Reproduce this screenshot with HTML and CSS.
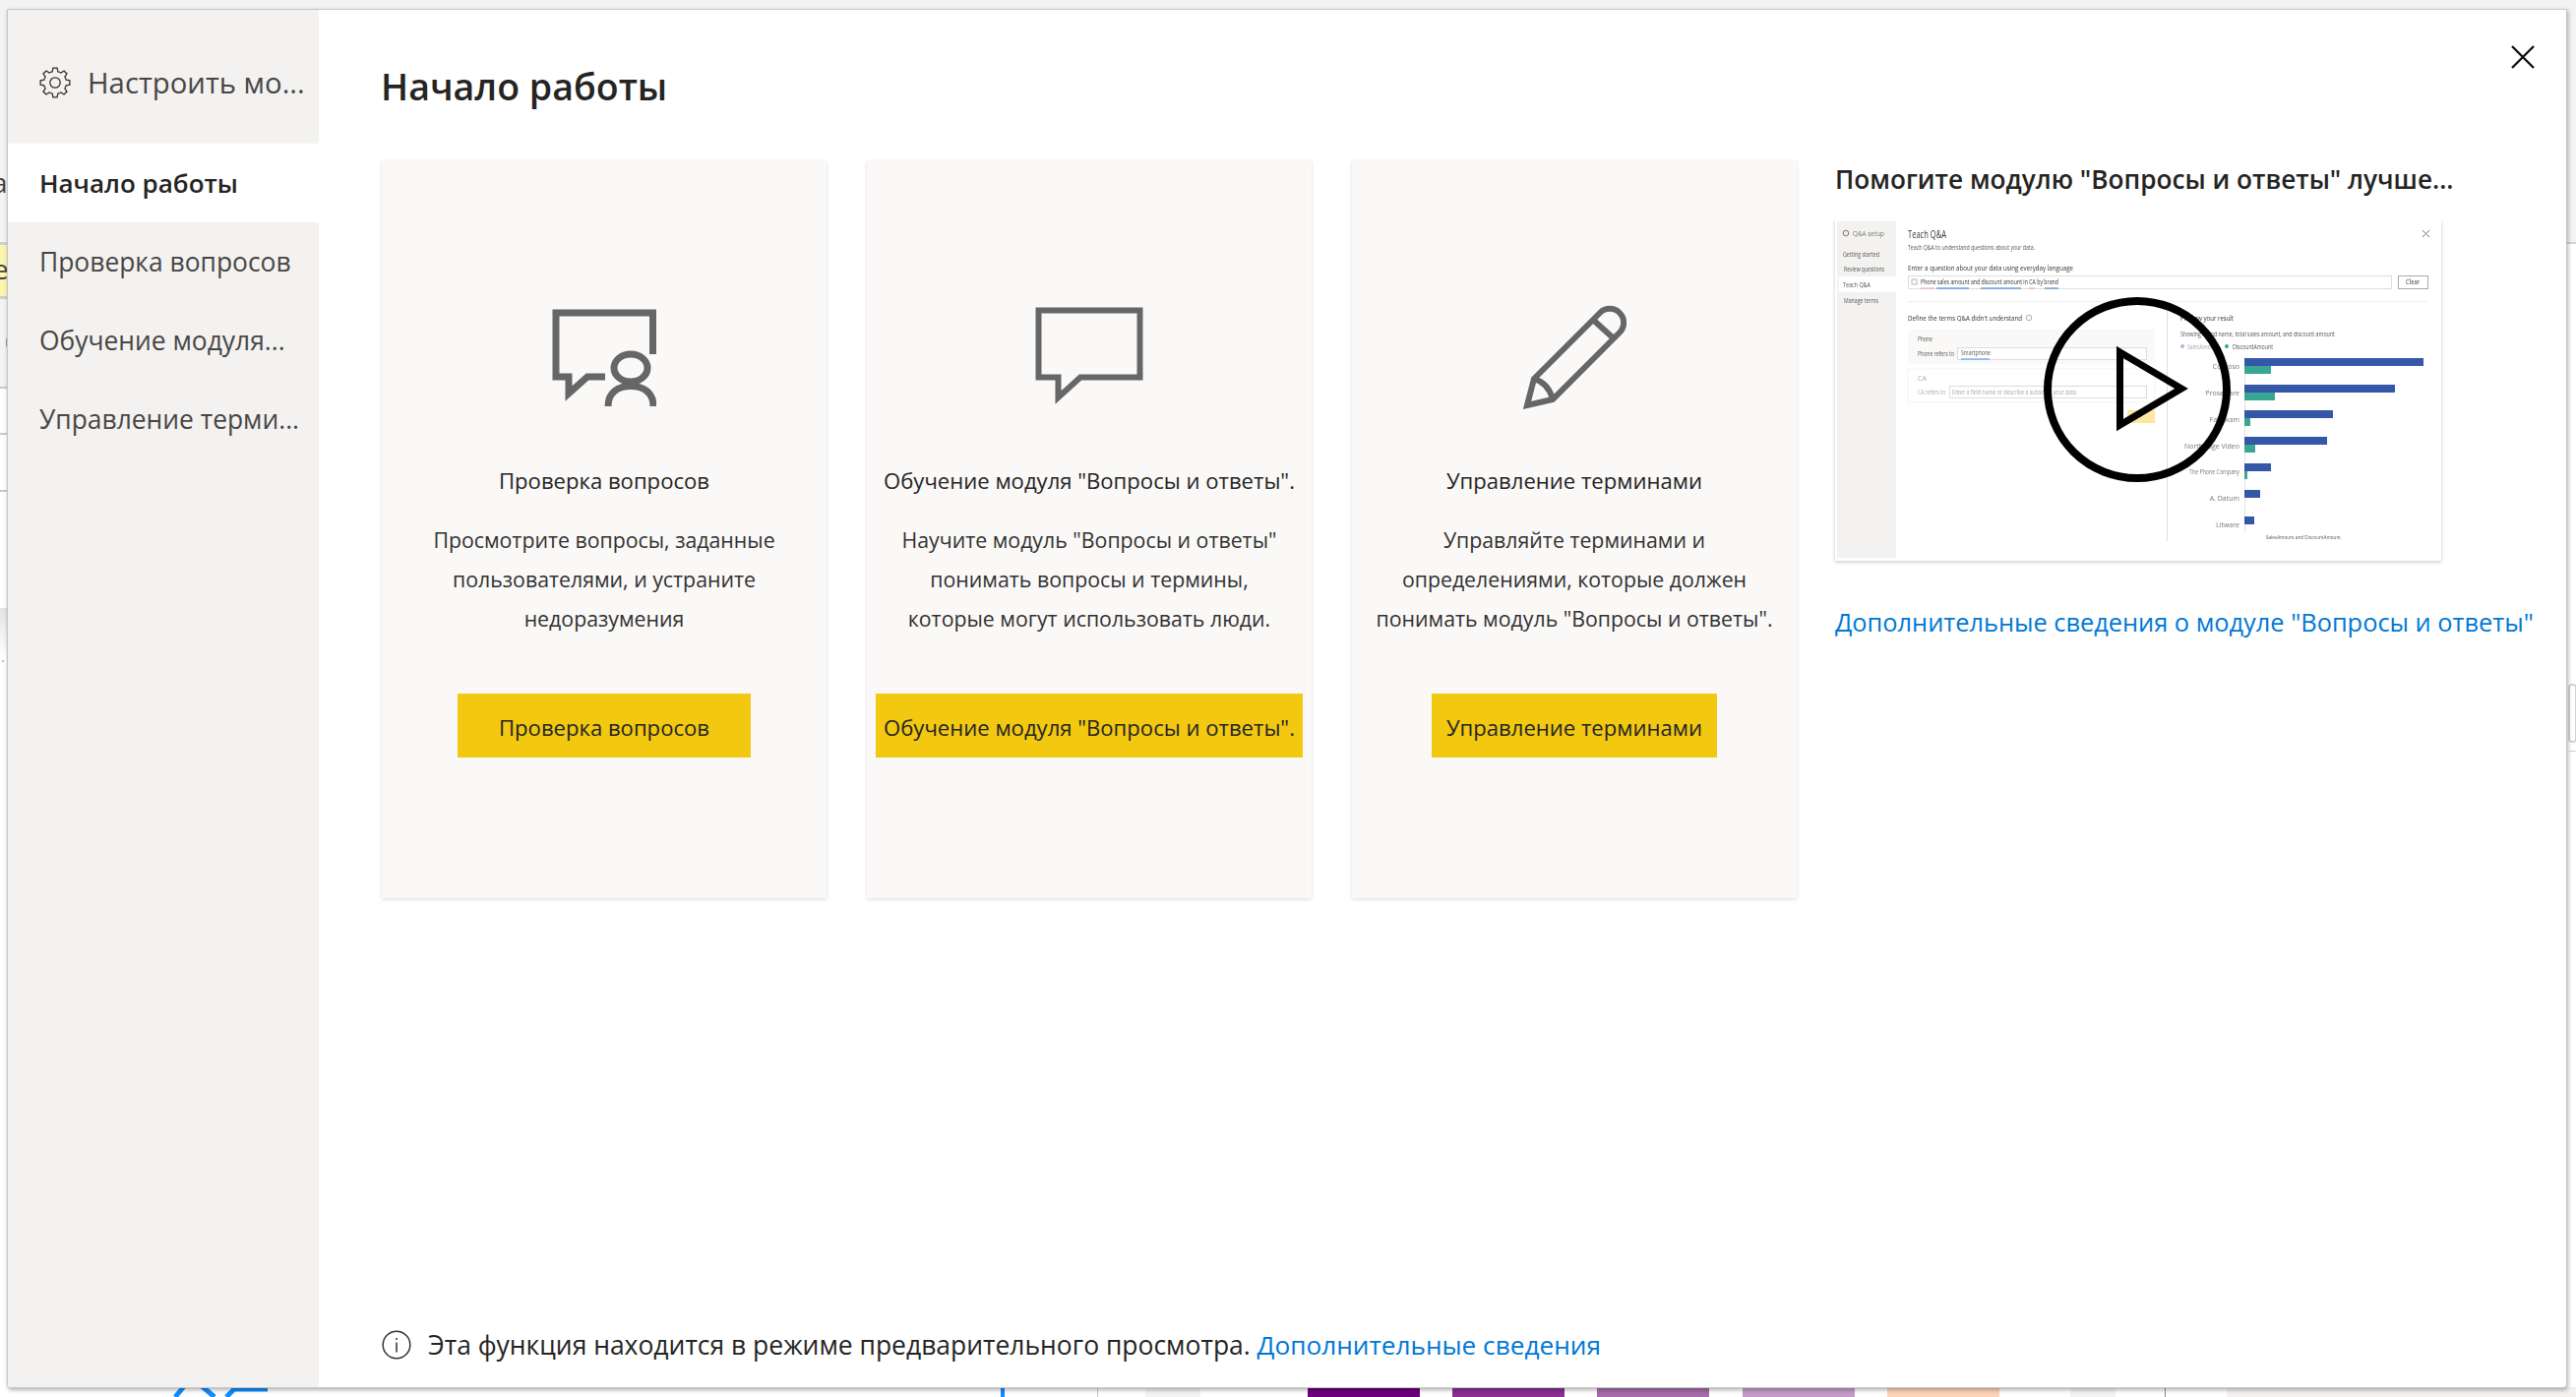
FILE: index.html
```html
<!DOCTYPE html>
<html lang="ru">
<head>
    <meta charset="UTF-8">
    <title>Настроить модуль "Вопросы и ответы"</title>
    <link rel="stylesheet" href="styles.css">
</head>
<body>
    <!-- what is left visible of the report behind the dialog -->
    <svg class="backdrop" width="2618" height="1420" viewBox="0 0 2618 1420">
        <defs>
            <linearGradient id="fade" x1="0" y1="0" x2="0" y2="1">
                <stop offset="0" stop-color="#e4e4e4"/>
                <stop offset="1" stop-color="#fff"/>
            </linearGradient>
        </defs>
        <rect width="2618" height="1420" fill="#fff"/>
        <rect width="2618" height="10" fill="#f3f3f3"/>
        <rect width="8" height="393" fill="#f3f3f3"/>
        <rect x="2608" width="10" height="246" fill="#f3f3f3"/>
        <rect x="2608" y="246" width="10" height="2" fill="#d2d2d2"/>
        <text class="back-text" x="-8" y="196">а</text>
        <rect y="246" width="8" height="58" fill="#d0d0d0"/>
        <rect y="249" width="8" height="52" fill="#fdf6b0"/>
        <text class="back-text" x="-7" y="284">е</text>
        <rect x="6" y="344" width="2" height="8" fill="#8f9bd0"/>
        <rect y="393" width="8" height="2" fill="#c8c8c8"/>
        <rect y="440" width="8" height="2" fill="#c8c8c8"/>
        <rect y="498" width="8" height="2" fill="#c8c8c8"/>
        <rect y="618" width="8" height="50" fill="url(#fade)"/>
        <rect x="2" y="671" width="2" height="2" fill="#bbb"/>
        <rect x="2611" y="696" width="7" height="58" rx="3" fill="#fff" stroke="#c8c8c8" stroke-width="1.5"/>
        <rect x="2611" y="763" width="7" height="1" fill="#d2d2d2"/>
        <path d="M178 1420L188 1408M204 1408L218 1420M230 1420L238 1412L272 1412" fill="none" stroke="#118dff" stroke-width="5"/>
        <rect x="1017" y="1410" width="4" height="10" fill="#118dff"/>
        <rect x="1115" y="1410" width="1" height="10" fill="#c8c8c8"/>
        <rect x="1164" y="1410" width="56" height="10" fill="#f3f3f3"/>
        <rect x="1329" y="1410" width="114" height="10" fill="#6b007b"/>
        <rect x="1476" y="1410" width="114" height="10" fill="#8a2e92"/>
        <rect x="1623" y="1410" width="114" height="10" fill="#a66ba9"/>
        <rect x="1771" y="1410" width="114" height="10" fill="#c49bc8"/>
        <rect x="1918" y="1410" width="114" height="10" fill="#fdd3b8"/>
        <rect x="2104" y="1410" width="46" height="10" fill="#f3f3f3"/>
        <rect x="2200" y="1410" width="1" height="10" fill="#8a8a8a"/>
        <rect x="2263" y="1410" width="355" height="10" fill="#f3f2f1"/>
    </svg>

    <div class="dialog">
        <aside class="sidebar">
            <div class="sidebar-head">
                <svg class="gear" width="32" height="32" viewBox="-16 -16 32 32">
                    <g fill="none" stroke="#323130" stroke-width="1.3">
                        <path d="M-4.4-10.6L-2.8-11.2L-2.1-14.9H2.1L2.8-11.2L4.4-10.6"/>
                        <path transform="rotate(45)" d="M-4.4-10.6L-2.8-11.2L-2.1-14.9H2.1L2.8-11.2L4.4-10.6"/>
                        <path transform="rotate(90)" d="M-4.4-10.6L-2.8-11.2L-2.1-14.9H2.1L2.8-11.2L4.4-10.6"/>
                        <path transform="rotate(135)" d="M-4.4-10.6L-2.8-11.2L-2.1-14.9H2.1L2.8-11.2L4.4-10.6"/>
                        <path transform="rotate(180)" d="M-4.4-10.6L-2.8-11.2L-2.1-14.9H2.1L2.8-11.2L4.4-10.6"/>
                        <path transform="rotate(225)" d="M-4.4-10.6L-2.8-11.2L-2.1-14.9H2.1L2.8-11.2L4.4-10.6"/>
                        <path transform="rotate(270)" d="M-4.4-10.6L-2.8-11.2L-2.1-14.9H2.1L2.8-11.2L4.4-10.6"/>
                        <path transform="rotate(315)" d="M-4.4-10.6L-2.8-11.2L-2.1-14.9H2.1L2.8-11.2L4.4-10.6"/>
                        <circle r="5.2"/>
                    </g>
                </svg>
                <span class="sidebar-title">Настроить мо...</span>
            </div>
            <div class="nav-item active">Начало работы</div>
            <div class="nav-item">Проверка вопросов</div>
            <div class="nav-item">Обучение модуля...</div>
            <div class="nav-item">Управление терми...</div>
        </aside>

        <main class="content">
            <h1 class="page-title">Начало работы</h1>
            <svg class="close" width="24" height="24" viewBox="0 0 24 24">
                <path d="M1 1L23 23M23 1L1 23" fill="none" stroke="#111" stroke-width="2.4"/>
            </svg>

            <div class="row">
                <section class="card">
                    <div class="card-icon">
                        <svg width="106" height="99" viewBox="0 0 106 99">
                            <g fill="none" stroke="#666" stroke-width="7">
                                <path d="M102.5 46V4H4V69H17V86L36 69H54"/>
                                <ellipse cx="80" cy="60" rx="17" ry="14"/>
                                <path d="M57 99C57 85 67 78.500 80 78.500C93 78.500 103 85 103 99"/>
                            </g>
                        </svg>
                    </div>
                    <h2 class="card-title">Проверка вопросов</h2>
                    <p class="card-text">Просмотрите вопросы, заданные<br>пользователями, и устраните<br>недоразумения</p>
                    <button class="btn btn-first">Проверка вопросов</button>
                </section>

                <section class="card">
                    <div class="card-icon">
                        <svg width="110" height="103" viewBox="0 0 110 103">
                            <path d="M3.500 3.500H106.500V71.500H46L23.500 92V71.500H3.500Z" fill="none" stroke="#666" stroke-width="6" stroke-miterlimit="8"/>
                        </svg>
                    </div>
                    <h2 class="card-title">Обучение модуля "Вопросы и ответы".</h2>
                    <p class="card-text">Научите модуль "Вопросы и ответы"<br>понимать вопросы и термины,<br>которые могут использовать люди.</p>
                    <button class="btn btn-wide">Обучение модуля "Вопросы и ответы".</button>
                </section>

                <section class="card">
                    <div class="card-icon">
                        <svg width="106" height="106" viewBox="0 0 106 106">
                            <g fill="none" stroke="#666" stroke-width="6">
                                <path d="M12 75L79 8A14 14 0 0 1 99 28L31 96L5 102Z"/>
                                <path d="M72 15L93 34"/>
                                <path d="M12 75C22 78 28 84 31 96"/>
                            </g>
                        </svg>
                    </div>
                    <h2 class="card-title">Управление терминами</h2>
                    <p class="card-text">Управляйте терминами и<br>определениями, которые должен<br>понимать модуль "Вопросы и ответы".</p>
                    <button class="btn">Управление терминами</button>
                </section>

                <section class="help">
                    <h2 class="help-title">Помогите модулю "Вопросы и ответы" лучше...</h2>
                    <div class="video">
                        <svg class="video-shot" width="616" height="347" viewBox="0 0 616 347">
                            <rect x="2" y="2" width="60" height="342" fill="#f3f2f1"/>
                            <rect x="4" y="58" width="58" height="16" fill="#fff"/>
                            <circle cx="11" cy="14" r="2.800" fill="none" stroke="#777"/>
                            <text class="shot-text big" x="18" y="17" textLength="32" lengthAdjust="spacingAndGlyphs">Q&amp;A setup</text>
                            <text class="shot-text" x="8" y="38" textLength="37" lengthAdjust="spacingAndGlyphs">Getting started</text>
                            <text class="shot-text" x="9" y="53" textLength="41" lengthAdjust="spacingAndGlyphs">Review questions</text>
                            <text class="shot-text" x="8" y="69" textLength="28" lengthAdjust="spacingAndGlyphs">Teach Q&amp;A</text>
                            <text class="shot-text" x="9" y="85" textLength="35" lengthAdjust="spacingAndGlyphs">Manage terms</text>

                            <text class="shot-text title" x="74" y="19" textLength="39" lengthAdjust="spacingAndGlyphs">Teach Q&amp;A</text>
                            <text class="shot-text" x="74" y="31" textLength="129" lengthAdjust="spacingAndGlyphs">Teach Q&amp;A to understand questions about your data.</text>
                            <path d="M597 11L604 18M604 11L597 18" stroke="#777" fill="none"/>
                            <text class="shot-text dark" x="74" y="52" textLength="168" lengthAdjust="spacingAndGlyphs">Enter a question about your data using everyday language</text>
                            <rect x="74.500" y="57.500" width="491" height="13" fill="#fff" stroke="#ddd"/>
                            <rect x="78" y="61" width="5" height="5" fill="none" stroke="#999" stroke-width=".7"/>
                            <text class="shot-text dark" x="87" y="66" textLength="140" lengthAdjust="spacingAndGlyphs">Phone sales amount and discount amount in CA by brand</text>
                            <path d="M87 70H101M197 70H203" stroke="#eba4a8" stroke-width="1.200"/>
                            <path d="M103 70H136M148 70H189M213 70H227" stroke="#2e7ad0" stroke-width="1.200"/>
                            <rect x="572.500" y="57.500" width="30" height="13" fill="#fff" stroke="#aaa"/>
                            <text class="shot-text dark" x="580" y="66" textLength="14" lengthAdjust="spacingAndGlyphs">Clear</text>
                            <path d="M74 83.500H602" stroke="#eee"/>

                            <text class="shot-text dark" x="74" y="103" textLength="116" lengthAdjust="spacingAndGlyphs">Define the terms Q&amp;A didn't understand</text>
                            <circle cx="197" cy="100" r="2.800" fill="none" stroke="#888" stroke-width=".7"/>
                            <rect x="74" y="112" width="251" height="35" fill="#faf9f8"/>
                            <text class="shot-text" x="84" y="124" textLength="15" lengthAdjust="spacingAndGlyphs">Phone</text>
                            <text class="shot-text" x="84" y="139" textLength="37" lengthAdjust="spacingAndGlyphs">Phone refers to</text>
                            <rect x="124.500" y="130.500" width="192" height="12" fill="#fff" stroke="#ddd"/>
                            <text class="shot-text" x="128" y="138" textLength="30" lengthAdjust="spacingAndGlyphs">Smartphone</text>
                            <path d="M128 142H157" stroke="#5ea2e8" stroke-width="1.200"/>
                            <rect x="74" y="152" width="251" height="34" fill="#fff" stroke="#f3f3f3"/>
                            <text class="shot-text faint" x="84" y="164">CA</text>
                            <text class="shot-text faint" x="84" y="178" textLength="28" lengthAdjust="spacingAndGlyphs">CA refers to</text>
                            <rect x="116.500" y="169.500" width="200" height="12" fill="#fff" stroke="#ddd"/>
                            <text class="shot-text faint" x="119" y="178" textLength="126" lengthAdjust="spacingAndGlyphs">Enter a field name or describe a subset of your data</text>
                            <rect x="297" y="194" width="28" height="13" fill="#fbe79e"/>

                            <path d="M337.500 90V327" stroke="#ddd"/>
                            <text class="shot-text dark" x="351" y="103" textLength="54" lengthAdjust="spacingAndGlyphs">Preview your result</text>
                            <text class="shot-text" x="351" y="119" textLength="157" lengthAdjust="spacingAndGlyphs">Showing brand name, total sales amount, and discount amount</text>
                            <circle cx="353" cy="129" r="2" fill="#a9b8dc"/>
                            <text class="shot-text faint" x="358" y="132" textLength="32" lengthAdjust="spacingAndGlyphs">SalesAmount</text>
                            <circle cx="398" cy="129" r="2" fill="#37a794"/>
                            <text class="shot-text" x="404" y="132" textLength="41" lengthAdjust="spacingAndGlyphs">DiscountAmount</text>

                            <g class="shot-labels">
                                <text class="shot-text end" x="411" y="152">Contoso</text>
                                <text class="shot-text end" x="411" y="179">Proseware</text>
                                <text class="shot-text end" x="411" y="206">Fabrikam</text>
                                <text class="shot-text end" x="411" y="233">Northridge Video</text>
                                <text class="shot-text end" x="411" y="259" textLength="51" lengthAdjust="spacingAndGlyphs">The Phone Company</text>
                                <text class="shot-text end" x="411" y="286">A. Datum</text>
                                <text class="shot-text end" x="411" y="313">Litware</text>
                            </g>
                            <path d="M416.500 140V318" stroke="#e3e3e3"/>
                            <g fill="#3457a8">
                                <rect x="416" y="141" width="182" height="8"/>
                                <rect x="416" y="168" width="153" height="8"/>
                                <rect x="416" y="194" width="90" height="8"/>
                                <rect x="416" y="221" width="84" height="8"/>
                                <rect x="416" y="248" width="27" height="8"/>
                                <rect x="416" y="275" width="16" height="8"/>
                                <rect x="416" y="302" width="10" height="8"/>
                            </g>
                            <g fill="#37a794">
                                <rect x="416" y="149" width="27" height="8"/>
                                <rect x="416" y="176" width="31" height="8"/>
                                <rect x="416" y="202" width="6" height="8"/>
                                <rect x="416" y="229" width="11" height="8"/>
                                <rect x="416" y="256" width="3" height="8"/>
                            </g>
                            <text class="shot-text tiny" x="438" y="325" textLength="76" lengthAdjust="spacingAndGlyphs">SalesAmount and DiscountAmount</text>
                        </svg>
                        <svg class="play" width="196" height="196" viewBox="0 0 196 196">
                            <ellipse cx="98" cy="98" rx="91" ry="90" fill="none" stroke="#000" stroke-width="8"/>
                            <path d="M80.500 60L143 97L80.500 134Z" fill="none" stroke="#000" stroke-width="7" stroke-miterlimit="6"/>
                        </svg>
                    </div>
                    <a class="link help-link" href="#">Дополнительные сведения о модуле "Вопросы и ответы"</a>
                </section>
            </div>

            <footer class="note">
                <svg class="note-icon" width="30" height="30" viewBox="0 0 30 30">
                    <circle cx="15" cy="15" r="13.800" fill="none" stroke="#323130" stroke-width="1.500"/>
                    <path d="M15 12.500V22.500M15 8V10" fill="none" stroke="#323130" stroke-width="1.500"/>
                </svg>
                <span>Эта функция находится в режиме предварительного просмотра. <a class="link" href="#">Дополнительные сведения</a></span>
            </footer>
        </main>
    </div>
</body>
</html>
```

FILE: styles.css
```css
* {
    box-sizing: border-box;
}

body {
    margin: 0;
    width: 2618px;
    height: 1420px;
    overflow: hidden;
    position: relative;
    font-family: "Open Sans", "Noto Sans", sans-serif;
    color: #252423;
    background-color: #fff;
}

.backdrop {
    position: absolute;
    left: 0;
    top: 0;
}

.back-text {
    font-family: "Open Sans", sans-serif;
    font-size: 28px;
    fill: #444;
}

.dialog {
    position: absolute;
    left: 7px;
    top: 9px;
    width: 2602px;
    height: 1402px;
    display: flex;
    background-color: #fff;
    border: 1px solid #c8c6c4;
    border-radius: 0 0 4px 4px;
    box-shadow: 1px 2px 4px rgba(0, 0, 0, 0.3);
    overflow: hidden;
}

.sidebar {
    width: 316px;
    flex: none;
    background-color: #f3f2f1;
}

.sidebar-head {
    height: 136px;
    padding: 11px 0 0 32px;
    display: flex;
    align-items: center;
    gap: 17px;
}

.gear {
    flex: none;
}

.sidebar-title {
    font-size: 29.300px;
    color: #484644;
    white-space: nowrap;
}

.nav-item {
    height: 80px;
    line-height: 81px;
    padding-left: 32px;
    font-size: 26.400px;
    color: #484644;
    white-space: nowrap;
}

.nav-item.active {
    background-color: #fff;
    color: #252423;
    font-size: 26px;
    font-weight: 600;
}

.content {
    flex: 1;
    position: relative;
    display: flex;
    flex-direction: column;
    padding: 54px 0 23px 64px;
}

.page-title {
    margin: 0 0 50px -1px;
    font-size: 37.500px;
    line-height: 48px;
    font-weight: 600;
}

.close {
    position: absolute;
    right: 32px;
    top: 36px;
}

.row {
    display: flex;
    gap: 41px;
    align-items: flex-start;
}

.card {
    width: 452px;
    height: 751px;
    flex: none;
    padding-top: 149px;
    display: flex;
    flex-direction: column;
    align-items: center;
    background-color: #faf9f8;
    box-shadow: 0 1.6px 3.6px rgba(0, 0, 0, 0.13), 0 0.3px 0.9px rgba(0, 0, 0, 0.11);
}

.card-icon {
    height: 104px;
    display: flex;
    align-items: center;
}

.card-title {
    margin: 53px 0 21px;
    font-size: 22.100px;
    line-height: 40px;
    font-weight: 500;
    white-space: nowrap;
}

.card-text {
    margin: 0 0 56px;
    font-size: 21.300px;
    line-height: 40px;
    text-align: center;
    white-space: nowrap;
    color: #323130;
}

.btn {
    height: 65px;
    padding: 2px 15px 0;
    border: none;
    background-color: #f2c811;
    color: #252423;
    font-family: inherit;
    font-size: 22.100px;
    font-weight: 500;
    white-space: nowrap;
}

.btn-first {
    padding: 2px 42px 0;
}

.btn-wide {
    padding: 2px 8px 0;
}

.help {
    width: 712px;
    margin-left: -2px;
}

.help-title {
    margin: 0 0 21px;
    font-size: 26.200px;
    line-height: 40px;
    font-weight: 600;
    white-space: nowrap;
}

.video {
    position: relative;
    width: 616px;
    height: 347px;
    margin-bottom: 42px;
    box-shadow: 0 1.6px 3.6px rgba(0, 0, 0, 0.22), 0 0.3px 0.9px rgba(0, 0, 0, 0.18);
}

.video-shot {
    display: block;
    background-color: #fff;
    filter: blur(0.5px);
}

.play {
    position: absolute;
    left: 209px;
    top: 75px;
}

.shot-text {
    font-family: "Open Sans", sans-serif;
    font-size: 7px;
    fill: #555;
}

.shot-text.big {
    font-size: 8px;
    fill: #777;
}

.shot-text.title {
    font-size: 10px;
    fill: #333;
}

.shot-text.dark {
    font-size: 7.100px;
    fill: #333;
}

.shot-text.faint {
    fill: #aaa;
}

.shot-text.end {
    text-anchor: end;
    fill: #777;
}

.shot-text.tiny {
    font-size: 5.400px;
}

.link {
    color: #0078d4;
    text-decoration: none;
}

.help-link {
    display: block;
    font-size: 25.360px;
    line-height: 40px;
    white-space: nowrap;
}

.note {
    margin-top: auto;
    display: flex;
    align-items: center;
    gap: 17px;
    font-size: 26.460px;
    line-height: 40px;
}

.note .link {
    font-size: 26.200px;
}

.note-icon {
    flex: none;
}
```
